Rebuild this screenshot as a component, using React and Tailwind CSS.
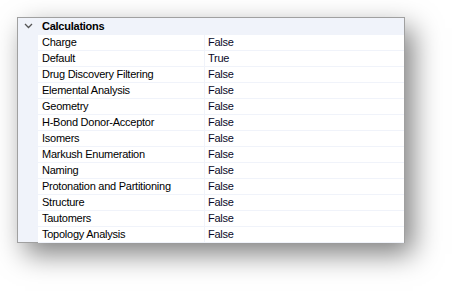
import React from "react";

const rows = [
  ["Charge", "False"],
  ["Default", "True"],
  ["Drug Discovery Filtering", "False"],
  ["Elemental Analysis", "False"],
  ["Geometry", "False"],
  ["H-Bond Donor-Acceptor", "False"],
  ["Isomers", "False"],
  ["Markush Enumeration", "False"],
  ["Naming", "False"],
  ["Protonation and Partitioning", "False"],
  ["Structure", "False"],
  ["Tautomers", "False"],
  ["Topology Analysis", "False"],
];

const App = () => {
  return (
    <div className="w-[453px] h-[291px] bg-white pl-[17px] pt-[17px] font-['Liberation_Sans',Arial,sans-serif] text-[11px] tracking-[-0.25px] text-black">
      <div className="w-[388px] h-[226px] border border-[#a0a0a0] bg-[#f0f3fa] shadow-[8px_11px_26px_rgba(0,0,0,0.5)] flex flex-col">
        <div className="h-[17px] flex items-center">
          <div className="w-[20px] flex justify-center">
            <svg width="9" height="6" viewBox="0 0 9 6">
              <path d="M1 1 L4.5 4.5 L8 1" fill="none" stroke="#555" strokeWidth="1.3" />
            </svg>
          </div>
          <span className="pl-[4px] font-bold">Calculations</span>
        </div>
        {rows.map(([name, value]) => (
          <div key={name} className="h-[16px] flex">
            <div className="w-[20px]" />
            <div className="w-[166px] bg-white border-b border-[#f0f3fa] pl-[4px] leading-[15px]">
              {name}
            </div>
            <div className="w-px bg-[#f0f3fa]" />
            <div className="flex-1 bg-white border-b border-[#f0f3fa] pl-[3px] leading-[15px] text-[#0a0a28]">
              {value}
            </div>
          </div>
        ))}
      </div>
    </div>
  );
};

export default App;
